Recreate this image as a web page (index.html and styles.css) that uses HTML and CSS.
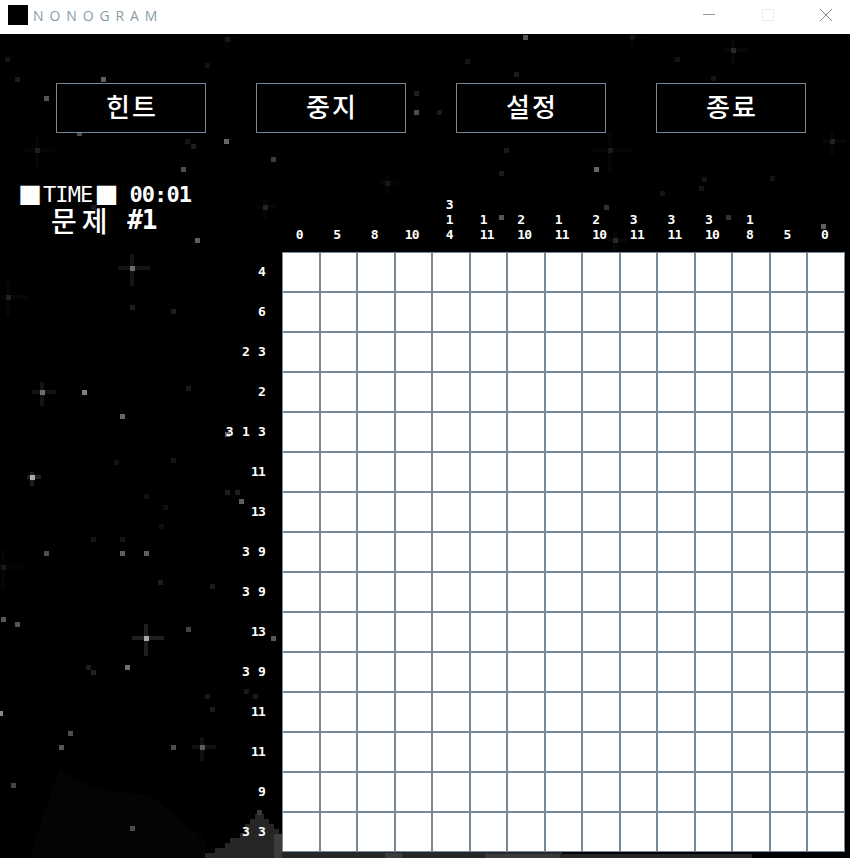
FILE: index.html
```html
<!DOCTYPE html>
<html lang="ko">
<head>
  <meta charset="UTF-8" />
  <title>NONOGRAM</title>
  <link rel="stylesheet" href="styles.css">
</head>
<body>
  <div class="titlebar">
    <div class="app-icon"></div>
    <div class="app-name">NONOGRAM</div>
    <div class="win-controls">
      <svg class="win-btn" viewBox="0 0 12 12"><path d="M0 5.5H12" stroke="#999" fill="none"/></svg>
      <svg class="win-btn" viewBox="0 0 12 12"><path d="M.5.5H11.5V11.5H.5Z" stroke="#eeeee8" fill="none"/></svg>
      <svg class="win-btn" viewBox="0 0 12 12"><path d="M0 0L12 12M12 0L0 12" stroke="#888" fill="none"/></svg>
    </div>
  </div>

  <div class="screen">
    <svg class="stars" id="stars" width="850" height="824" viewBox="0 34 850 824" shape-rendering="crispEdges">
      <polygon class="hill-far" points="30,858 45,810 60,770 100,790 150,795 205,840 205,858"/>
      <polygon class="hill" points="205,858 205,853 215,853 215,848 225,848 225,843 230,843 230,838 240,838 240,833 245,833 245,824 250,824 250,819 255,819 255,814 264,814 264,819 269,819 269,824 274,824 274,829 279,829 279,834 284,834 284,858"/>
      <rect class="hill-light" x="257" y="810" width="5" height="5"/>
      <rect class="hill-light" x="274" y="834" width="8" height="24"/>
      <rect class="hill" x="282" y="852" width="120" height="6"/>
      <rect class="hill-light" x="385" y="853" width="38" height="5"/>
      <rect class="hill" x="402" y="852" width="160" height="6"/>
      <rect class="hill-light" x="485" y="854" width="75" height="4"/>
      <rect class="hill" x="562" y="854" width="190" height="4"/>
    </svg>

    <div class="toolbar">
      <button class="menu-btn">힌트</button>
      <button class="menu-btn">중지</button>
      <button class="menu-btn">설정</button>
      <button class="menu-btn">종료</button>
    </div>

    <div class="game">
      <div class="status">
        <div class="timer"><span class="block">■</span><span class="time-label">TIME</span><span class="block">■</span><span class="clock">00:01</span></div>
        <div class="puzzle-no"><span class="puzzle-word">문제</span> #1</div>
      </div>
      <div class="col-clues" id="col-clues"></div>
      <div class="row-clues" id="row-clues"></div>
      <div class="grid" id="grid"></div>
    </div>
  </div>

  <script>
    const colClues = [[0], [5], [8], [10], [3, 1, 4], [1, 11], [2, 10], [1, 11], [2, 10], [3, 11], [3, 11], [3, 10], [1, 8], [5], [0]];
    const rowClues = [[4], [6], [2, 3], [2], [3, 1, 3], [11], [13], [3, 9], [3, 9], [13], [3, 9], [11], [11], [9], [3, 3]];

    colClues.forEach(clue => {
      const col = document.createElement('div');
      col.className = 'col-clue';
      col.innerHTML = `<div>${clue.join('<br>')}</div>`;
      document.getElementById('col-clues').appendChild(col);
    });

    rowClues.forEach(clue => {
      const row = document.createElement('div');
      row.className = 'row-clue';
      row.innerText = clue.join(' ');
      document.getElementById('row-clues').appendChild(row);
    });

    for (let i = 0; i < 225; i++) {
      const cell = document.createElement('div');
      cell.className = 'cell';
      document.getElementById('grid').appendChild(cell);
    }

    // x, y, brightness
    const dots = [
      [103,79,110],[46,98,100],[226,141,120],[273,159,70],[183,169,90],[416,112,90],[416,93,50],[193,146,50],[187,141,35],
      [197,240,110],[93,207,45],[17,79,45],[7,59,35],[207,65,30],[79,133,90],[525,37,100],[516,74,45],[439,112,45],
      [596,169,120],[501,217,100],[606,207,60],[728,217,60],[823,226,110],[704,179,35],[701,188,35],[662,193,35],
      [772,178,30],[501,173,45],[506,150,40],[467,61,35],[677,59,30],[713,78,35],
      [84,392,150],[122,416,120],[132,307,50],[173,311,50],[188,388,40],[227,434,110],[241,501,110],[227,492,50],[237,492,50],
      [116,462,30],[173,460,35],[146,496,30],[165,507,25],[161,526,25],[93,539,35],[122,539,35],
      [46,553,90],[122,553,110],[146,553,110],[160,582,45],[212,586,45],[3,619,100],[17,624,100],[188,629,80],[273,638,100],
      [127,667,130],[88,667,50],[93,672,55],[246,691,40],[255,696,40],[207,696,40],[212,709,45],[70,733,90],[61,747,100],
      [173,747,90],[13,785,80],[132,828,90],[0,713,160]
    ];
    // x, y, brightness, arm length
    const crosses = [
      [37,150,30,14],[265,207,35,8],[387,183,25,8],[227,39,22,6],[733,50,40,10],[610,150,28,18],[832,141,32,10],[615,240,40,8],[632,37,20,6],
      [132,268,110,14],[8,297,35,16],[42,392,110,10],[32,477,170,5],[146,638,170,14],[202,747,90,10],[3,567,26,18]
    ];

    const stars = document.getElementById('stars');
    function addRect(x, y, w, h, v) {
      const r = document.createElementNS('http://www.w3.org/2000/svg', 'rect');
      r.setAttribute('x', x);
      r.setAttribute('y', y);
      r.setAttribute('width', w);
      r.setAttribute('height', h);
      r.setAttribute('fill', `rgb(${v},${v},${v})`);
      stars.appendChild(r);
    }

    crosses.forEach(([x, y, v, arm]) => {
      const glow = Math.round(v * 0.18);
      addRect(x - arm, y - 2, arm * 2 + 4, 4, glow);
      addRect(x - 2, y - arm, 4, arm * 2 + 4, glow);
      addRect(x - 2, y - 2, 5, 5, v);
    });
    dots.forEach(([x, y, v]) => addRect(x - 2, y - 2, 5, 5, v < 60 ? Math.round(v * 0.6) : Math.round(v * 0.85)));
  </script>
</body>
</html>
```
FILE: styles.css
```css
body {
  margin: 0;
  width: 850px;
  height: 858px;
  overflow: hidden;
  background-color: #000;
  font-family: "DejaVu Sans Mono", monospace;
  color: #fff;
}

.titlebar {
  height: 34px;
  background-color: #fff;
  display: flex;
  align-items: center;
  padding-left: 8px;
}

.app-icon {
  width: 20px;
  height: 20px;
  margin-top: -4px;
  background-color: #000;
}

.app-name {
  margin-left: 5px;
  margin-top: -3px;
  font-family: "Open Sans", sans-serif;
  font-size: 14px;
  letter-spacing: 5.9px;
  color: #8a9aa6;
}

.win-controls {
  margin-left: auto;
  display: flex;
  gap: 46.5px;
  padding-right: 18px;
  margin-top: -4px;
}

.win-btn {
  width: 12px;
  height: 12px;
}

.screen {
  position: relative;
  height: 824px;
}

.stars {
  position: absolute;
  top: 0;
  left: 0;
}

.hill {
  fill: #262626;
}

.hill-far {
  fill: #040404;
}

.hill-light {
  fill: #3c3c3c;
}

.toolbar {
  position: relative;
  display: flex;
  gap: 50px;
  padding: 49px 0 0 56px;
}

.menu-btn {
  width: 150px;
  height: 50px;
  padding: 0 0 4px 2px;
  background-color: #000;
  border: 1px solid #778899;
  color: #fff;
  font-family: "Noto Sans CJK KR", sans-serif;
  font-size: 26px;
  font-weight: 500;
  letter-spacing: 2px;
  line-height: 1;
}

.game {
  position: relative;
  display: grid;
  grid-template-columns: 282px 563px;
  grid-template-rows: 119px 600px;
}

.status {
  padding: 49px 0 0 18px;
}

.timer {
  display: flex;
  align-items: center;
  height: 24px;
  font-size: 22px;
  letter-spacing: -0.9px;
}

.block {
  font-family: "Noto Sans CJK KR", sans-serif;
  font-size: 24px;
  letter-spacing: 0;
  line-height: 1;
}

.time-label {
  margin: 0 2px 0 1px;
}

.clock {
  margin-left: 11px;
  font-weight: bold;
}

.puzzle-no {
  margin: -2px 0 0 33px;
  font-size: 26px;
  font-weight: bold;
  letter-spacing: -1px;
  line-height: 32px;
  white-space: pre;
}

.puzzle-word {
  font-family: "Noto Sans CJK KR", sans-serif;
  font-size: 28px;
  font-weight: 500;
  letter-spacing: 5px;
  vertical-align: -3px;
}

.col-clues {
  display: flex;
  align-items: flex-end;
  padding-bottom: 10px;
}

.col-clue {
  width: 37.53px;
  display: flex;
  justify-content: center;
  padding-right: 3px;
  box-sizing: border-box;
  font-size: 13px;
  font-weight: bold;
  letter-spacing: -0.8px;
  line-height: 15px;
}

.row-clues {
  display: flex;
  flex-direction: column;
}

.row-clue {
  height: 40px;
  box-sizing: border-box;
  display: flex;
  align-items: center;
  justify-content: flex-end;
  padding: 0 17px 2px 0;
  font-size: 13px;
  font-weight: bold;
  letter-spacing: -0.8px;
  word-spacing: 2px;
  white-space: pre;
}

.grid {
  display: grid;
  grid-template-columns: repeat(15, 1fr);
  grid-template-rows: repeat(15, 1fr);
  gap: 2px;
  padding: 1px;
  box-sizing: border-box;
  background-color: #778899;
}

.cell {
  background-color: #fff;
}
```
